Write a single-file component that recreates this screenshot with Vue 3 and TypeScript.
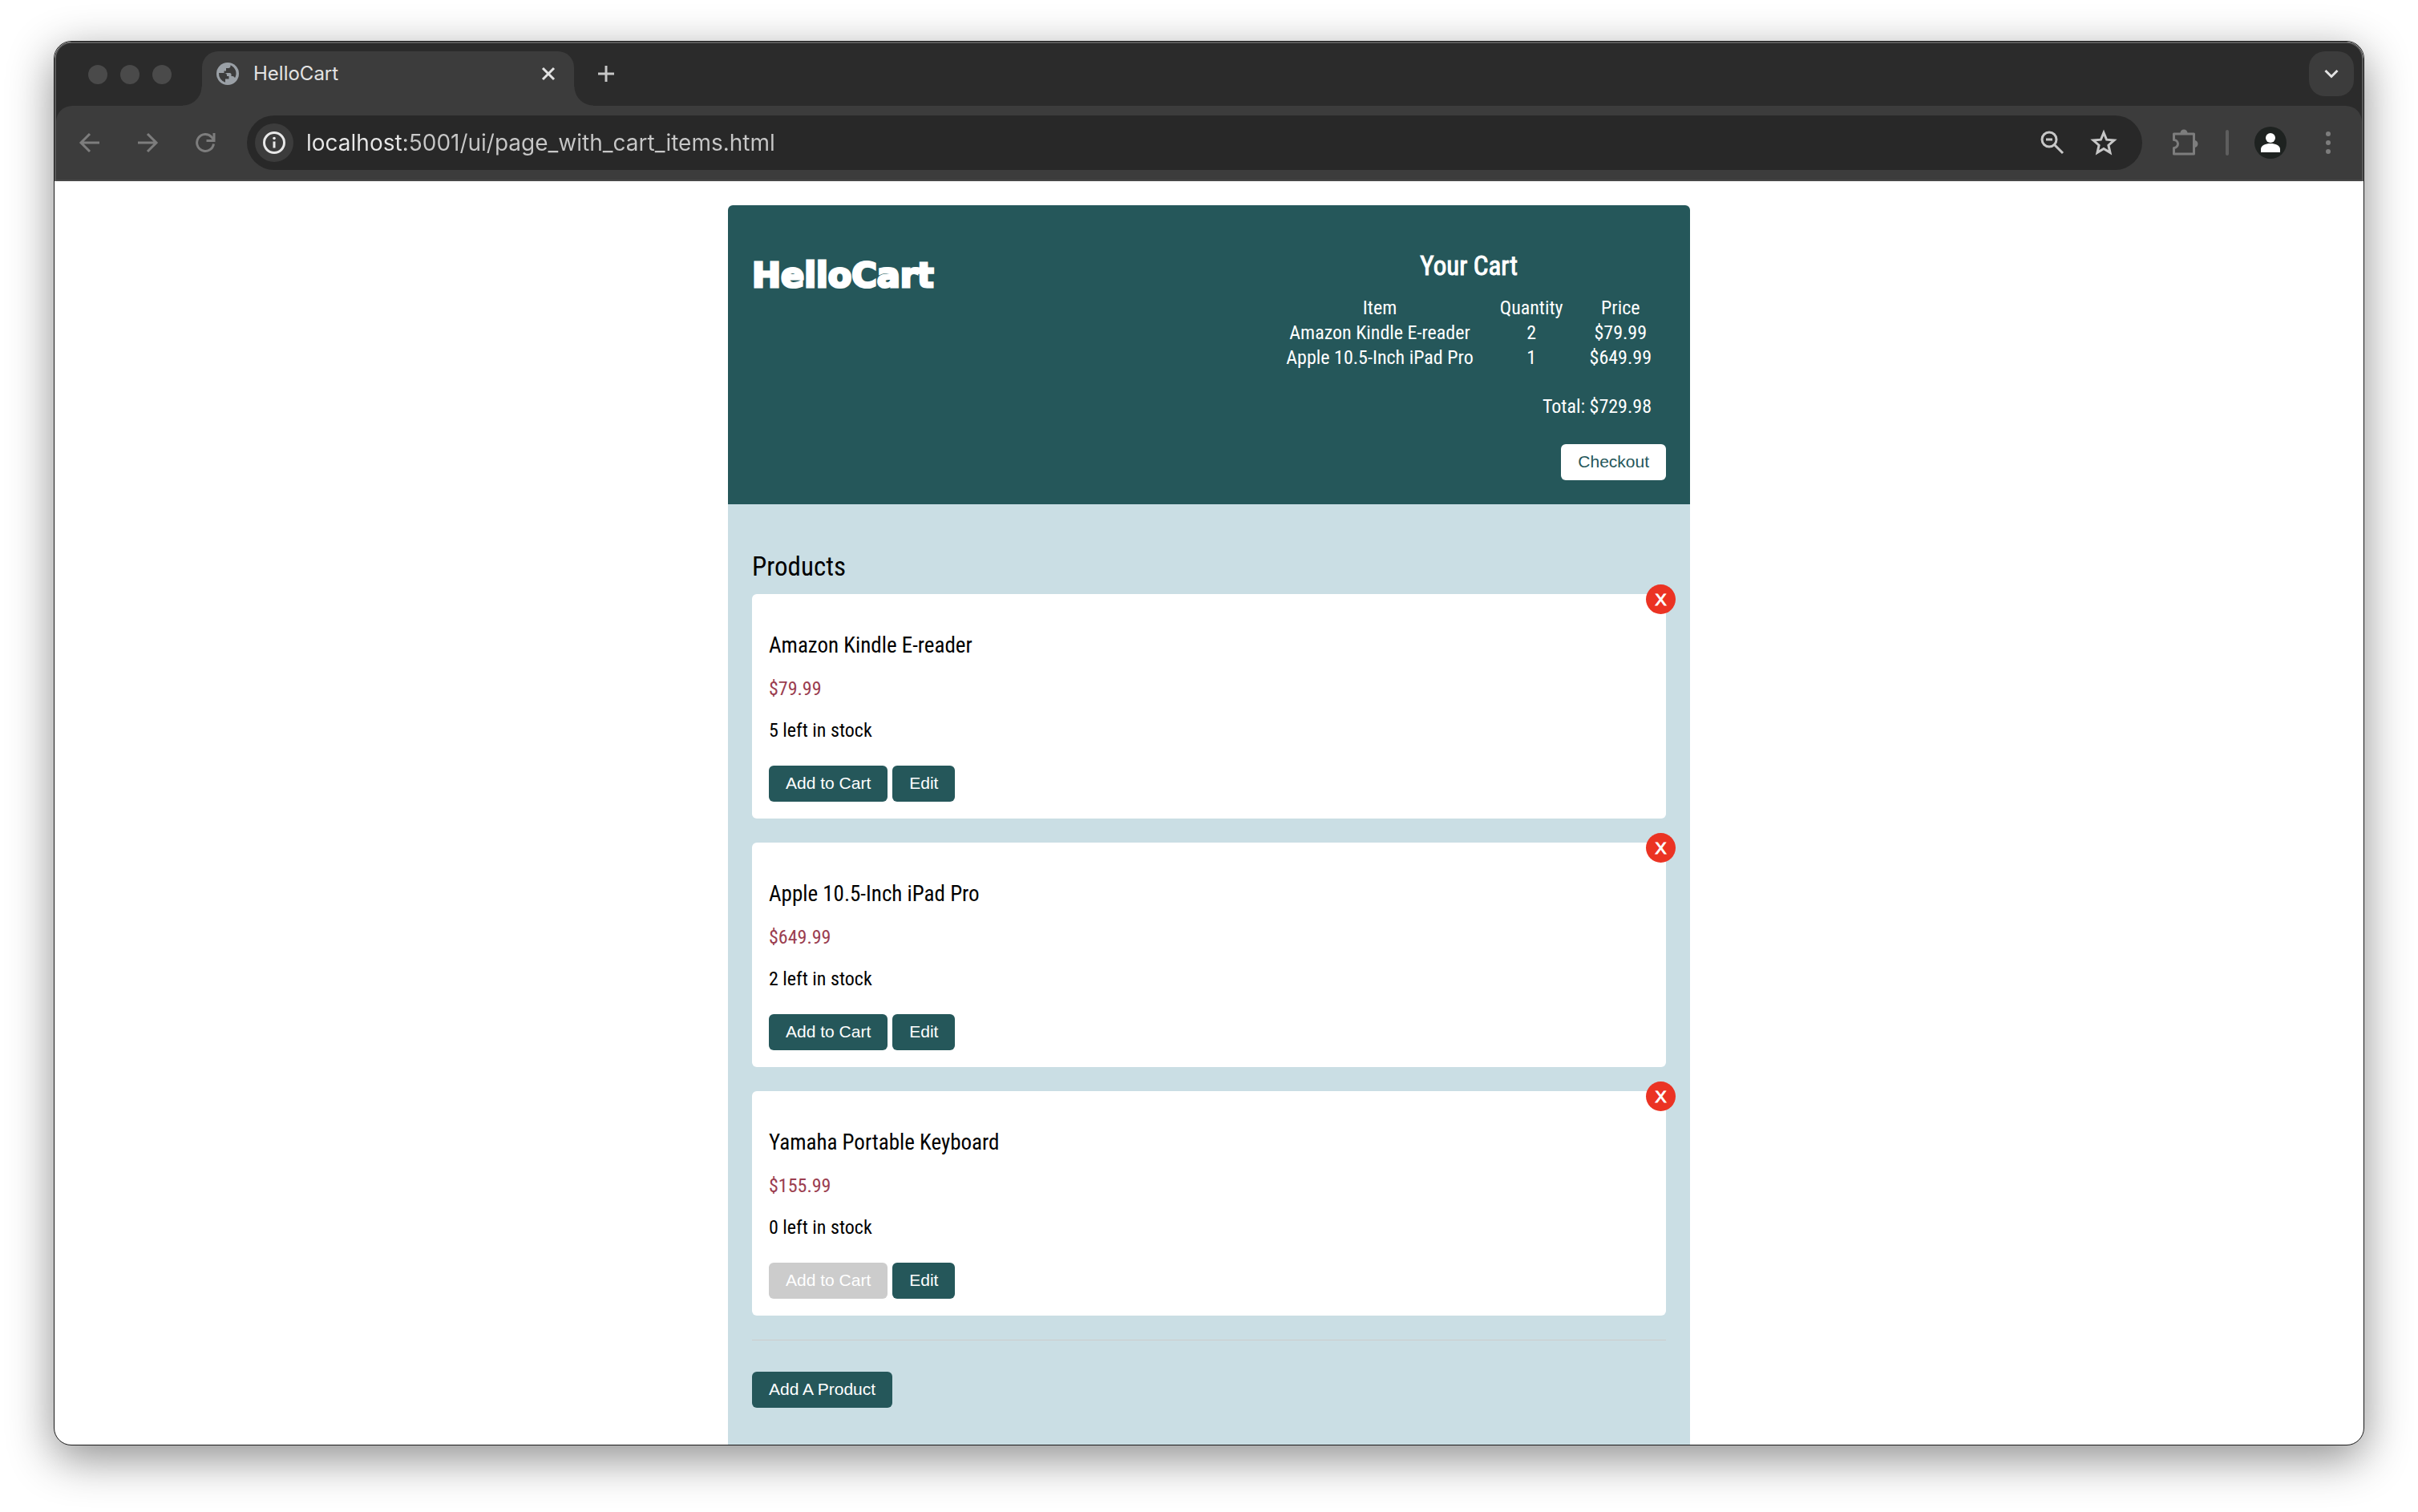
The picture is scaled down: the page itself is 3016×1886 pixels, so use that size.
<script setup lang="ts">
import { ref } from 'vue'

interface CartLine {
  name: string
  quantity: number
  price: string
}

interface Product {
  id: number
  name: string
  price: string
  stock: number
}

const url = ref('localhost:5001/ui/page_with_cart_items.html')

const cart: CartLine[] = [
  { name: 'Amazon Kindle E-reader', quantity: 2, price: '$79.99' },
  { name: 'Apple 10.5-Inch iPad Pro', quantity: 1, price: '$649.99' },
]

const products: Product[] = [
  { id: 1, name: 'Amazon Kindle E-reader', price: '$79.99', stock: 5 },
  { id: 2, name: 'Apple 10.5-Inch iPad Pro', price: '$649.99', stock: 2 },
  { id: 3, name: 'Yamaha Portable Keyboard', price: '$155.99', stock: 0 },
]
</script>

<template>
  <div class="desktop">
    <div class="window">
      <header class="chrome">
        <div class="tabstrip">
          <div class="lights"><i></i><i></i><i></i></div>
          <div class="tab">
            <svg class="globe" viewBox="0 0 28 28" width="28" height="28" aria-hidden="true">
              <circle cx="14" cy="14" r="14" fill="#9aa0a6" />
              <path d="M3 13h6.500c2.500 0 3.500 1.200 3.500 3v1h2.500v3.500h-4.500v4.200A11.200 11.200 0 0 1 3 13z" fill="#3c3c3c" />
              <path d="M17.500 3.300v1.200c0 1.500-1 2.500-2.500 2.500h-3v3.500h-2.500v2.500h7c1.500 0 2 1 2 2v2h1.500c1.500 0 2.500 1 3 2.300A11.200 11.200 0 0 0 17.500 3.300z" fill="#3c3c3c" />
            </svg>
            <span class="tab-title">HelloCart</span>
            <button class="bare" type="button" aria-label="Close tab">
              <svg viewBox="0 0 24 24" width="24" height="24"><path d="M5 5l14 14M19 5L5 19" stroke="#e3e3e3" stroke-width="3" fill="none" /></svg>
            </button>
          </div>
          <button class="bare new-tab" type="button" aria-label="New tab">
            <svg viewBox="0 0 24 24" width="24" height="24"><path d="M12 2v20M2 12h20" stroke="#c7c7c7" stroke-width="3" fill="none" /></svg>
          </button>
          <button class="bare tab-search" type="button" aria-label="Search tabs">
            <svg viewBox="0 0 24 24" width="24" height="24"><path d="M4.500 8l7.500 7.500L19.500 8" stroke="#e3e3e3" stroke-width="3" fill="none" /></svg>
          </button>
        </div>
        <div class="toolbar">
          <nav class="nav" aria-label="History">
            <button class="bare" type="button" aria-label="Back">
              <svg viewBox="0 0 28 28" width="28" height="28"><path d="M26 14H4M14 3L3 14l11 11" stroke="#7d7d7d" stroke-width="3" fill="none" /></svg>
            </button>
            <button class="bare" type="button" aria-label="Forward">
              <svg viewBox="0 0 28 28" width="28" height="28"><path d="M2 14h22M14 3l11 11-11 11" stroke="#7d7d7d" stroke-width="3" fill="none" /></svg>
            </button>
            <button class="bare" type="button" aria-label="Reload">
              <svg viewBox="0 0 28 28" width="28" height="28">
                <path d="M24.500 15.500A10.500 10.500 0 1 1 22 7l2 2.500" stroke="#7d7d7d" stroke-width="3" fill="none" />
                <path d="M25 2v9.500h-9.500" stroke="#7d7d7d" stroke-width="3" fill="none" />
              </svg>
            </button>
          </nav>
          <div class="omnibox">
            <button class="bare info" type="button" aria-label="View site information">
              <svg viewBox="0 0 28 28" width="28" height="28">
                <circle cx="14" cy="14" r="12.500" stroke="#e8e8e8" stroke-width="3" fill="none" />
                <path d="M14 12.500v8" stroke="#e8e8e8" stroke-width="3" />
                <circle cx="14" cy="8.500" r="1.800" fill="#e8e8e8" />
              </svg>
            </button>
            <input v-model="url" class="url" type="text" aria-label="Address" spellcheck="false" />
            <button class="bare" type="button" aria-label="Zoom">
              <svg viewBox="0 0 32 32" width="32" height="32" fill="none" stroke="#c7c7c7" stroke-width="3">
                <circle cx="12" cy="12" r="9" /><path d="M8 12h8M18.500 18.500l10.500 10.500" />
              </svg>
            </button>
            <button class="bare" type="button" aria-label="Bookmark this tab">
              <svg viewBox="0 0 34 34" width="34" height="34">
                <path d="M17 4.500l3.600 8.700 9.400.800-7.100 6.200 2.100 9.200-8-4.900-8 4.900 2.100-9.200L4 14l9.400-.800z" stroke="#c7c7c7" stroke-width="3" fill="none" />
              </svg>
            </button>
          </div>
          <div class="actions">
            <button class="bare" type="button" aria-label="Extensions">
              <svg viewBox="0 0 34 34" width="34" height="34">
                <path d="M3.500 6h25v25h-25v-7.500a5 5 0 0 0 0-10z" stroke="#7d7d7d" stroke-width="3" stroke-linejoin="round" fill="none" />
                <path d="M11.500 5a4.500 4.500 0 0 1 9 0zM29 14a4.500 4.500 0 0 1 0 9z" fill="#7d7d7d" />
              </svg>
            </button>
            <span class="divider"></span>
            <button class="bare profile" type="button" aria-label="Profile">
              <svg viewBox="0 0 40 40" width="40" height="40">
                <circle cx="20" cy="20" r="20" fill="#1e2220" />
                <circle cx="20" cy="14" r="6" fill="#fff" />
                <path d="M8 32v-4c0-4.500 6-7 12-7s12 2.500 12 7v4z" fill="#fff" />
              </svg>
            </button>
            <button class="bare menu" type="button" aria-label="Menu">
              <svg viewBox="0 0 28 28" width="28" height="28" fill="#7d7d7d">
                <circle cx="14" cy="3" r="3" /><circle cx="14" cy="14" r="3" /><circle cx="14" cy="25" r="3" />
              </svg>
            </button>
          </div>
        </div>
      </header>

      <div class="page">
        <main class="shop">
          <header class="shop-head">
            <h1 class="logo">HelloCart</h1>
            <section class="cart">
              <h2 class="heading">Your Cart</h2>
              <table class="lines">
                <thead>
                  <tr><th>Item</th><th>Quantity</th><th>Price</th></tr>
                </thead>
                <tbody>
                  <tr v-for="line in cart" :key="line.name">
                    <td>{{ line.name }}</td>
                    <td>{{ line.quantity }}</td>
                    <td>{{ line.price }}</td>
                  </tr>
                </tbody>
              </table>
              <p class="total">Total: $729.98</p>
              <button class="btn light" type="button">Checkout</button>
            </section>
          </header>

          <section class="products">
            <h2 class="heading">Products</h2>
            <article v-for="product in products" :key="product.id" class="card">
              <h3 class="name">{{ product.name }}</h3>
              <p class="price">{{ product.price }}</p>
              <p class="stock">{{ product.stock }} left in stock</p>
              <div class="buttons">
                <button class="btn" type="button" :disabled="product.stock === 0">Add to Cart</button>
                <button class="btn" type="button">Edit</button>
              </div>
              <button class="delete" type="button" :aria-label="'Delete ' + product.name">X</button>
            </article>
            <hr class="rule" />
            <button class="btn" type="button">Add A Product</button>
          </section>
        </main>
      </div>
    </div>
  </div>
</template>

<style>
body {
  margin: 0;
  background: #fff;
}
</style>

<style scoped>
* {
  box-sizing: border-box;
}

.desktop {
  padding: 51px 67px 83px;
  overflow: hidden;
}

.window {
  border: 1px solid #1a1a1a;
  border-radius: 22px;
  overflow: hidden;
  background: #fff;
  box-shadow: 0 16px 56px rgba(0, 0, 0, 0.45);
}

.chrome {
  border: solid #5a5a5a;
  border-width: 2px 2px 0;
  border-radius: 21px 21px 0 0;
  background: #2b2b2b;
  font-family: Inter, "Liberation Sans", sans-serif;
}

.bare {
  display: flex;
  align-items: center;
  justify-content: center;
  flex: none;
  padding: 0;
  border: 0;
  background: none;
}

.bare svg {
  display: block;
}

.tabstrip {
  display: flex;
  align-items: flex-start;
  height: 78px;
  padding: 10px 10px 0 40px;
}

.lights {
  display: flex;
  gap: 16px;
  padding-top: 17px;
}

.lights i {
  width: 24px;
  height: 24px;
  border-radius: 50%;
  background: #4a4a4a;
}

.tab {
  position: relative;
  display: flex;
  align-items: center;
  width: 464px;
  height: 68px;
  margin-left: 38px;
  padding: 0 20px 12px 18px;
  border-radius: 20px 20px 0 0;
  background: #3c3c3c;
}

.tab::before,
.tab::after {
  content: "";
  position: absolute;
  bottom: 0;
  width: 24px;
  height: 24px;
}

.tab::before {
  right: 100%;
  background: radial-gradient(circle at 0 0, transparent 23px, #3c3c3c 24px);
}

.tab::after {
  left: 100%;
  background: radial-gradient(circle at 100% 0, transparent 23px, #3c3c3c 24px);
}

.tab-title {
  flex: 1;
  margin-left: 18px;
  color: #e3e3e3;
  font-size: 24px;
  line-height: 28px;
}

.new-tab {
  margin-left: 28px;
  height: 56px;
}

.tab-search {
  width: 56px;
  height: 56px;
  margin-left: auto;
  border-radius: 20px;
  background: #3c3c3c;
}

.toolbar {
  display: flex;
  align-items: center;
  height: 94px;
  padding: 0 28px;
  border-bottom: 2px solid #474747;
  border-radius: 20px 20px 0 0;
  background: #3c3c3c;
}

.nav {
  display: flex;
  gap: 44px;
  margin-right: 38px;
}

.omnibox {
  display: flex;
  align-items: center;
  flex: 1;
  gap: 31px;
  height: 68px;
  padding: 0 31px 0 10px;
  border-radius: 34px;
  background: #282828;
}

.info {
  width: 48px;
  height: 48px;
  border-radius: 50%;
  background: #3c3c3c;
}

.url {
  flex: 1;
  min-width: 0;
  margin-left: -15px;
  padding: 0;
  border: 0;
  outline: 0;
  background: linear-gradient(90deg, #e8e8e8 123px, #c7c7c7 123px);
  background-clip: text;
  -webkit-text-fill-color: transparent;
  font-family: inherit;
  font-size: 28px;
  line-height: 36px;
}

.actions {
  display: flex;
  align-items: center;
  margin-left: 36px;
}

.divider {
  width: 4px;
  height: 32px;
  margin: 0 32px 0 34px;
  border-radius: 2px;
  background: #5e5e5e;
}

.menu {
  margin-left: 38px;
}

.page {
  padding-top: 30px;
  font-family: "Roboto Condensed", "Liberation Sans Narrow", Roboto, sans-serif;
  font-size: 24px;
  line-height: 28px;
  color: #000;
}

.shop {
  width: 100%;
  max-width: 1200px;
  margin: 0 auto;
  border-radius: 6px 6px 0 0;
  overflow: hidden;
}

.shop-head {
  display: flex;
  align-items: flex-start;
  justify-content: space-between;
  padding: 30px;
  background: #25575a;
  color: #fff;
}

.logo {
  margin: 29px 0 0;
  font-family: "DejaVu Sans", sans-serif;
  font-size: 43px;
  font-weight: 700;
  line-height: 56px;
  -webkit-text-stroke: 3px #fff;
}

.cart {
  display: flex;
  flex-direction: column;
  align-items: flex-end;
}

.heading {
  margin: 26px 0 15px;
  font-size: 33px;
  font-weight: 400;
  line-height: 40px;
}

.cart .heading {
  align-self: stretch;
  text-align: center;
  -webkit-text-stroke: 1px currentColor;
}

.lines {
  border-spacing: 3px;
  text-align: center;
}

.lines th,
.lines td {
  padding: 0 15px;
}

.lines th {
  font-weight: 400;
}

.total {
  margin: 30px 18px 33px 0;
}

.btn {
  height: 45px;
  padding: 0 21px 2px;
  border: 0;
  border-radius: 6px;
  background: #25575a;
  color: #fff;
  font-family: "Liberation Sans", Arial, sans-serif;
  font-size: 21px;
  line-height: 24px;
}

.btn.light {
  background: #fff;
  color: #25575a;
}

.btn:disabled {
  background: #ccc;
}

.products {
  padding: 2px 30px 46px;
  background: #cadee4;
}

.products .heading {
  margin: 56px 0 14px;
}

.card {
  position: relative;
  margin-bottom: 30px;
  padding: 21px;
  border-radius: 6px;
  background: #fff;
}

.name {
  margin: 27px 0 23px;
  font-size: 27px;
  font-weight: 400;
  line-height: 33px;
}

.price {
  margin: 0 0 24px;
  color: #9b3e50;
}

.stock {
  margin: 0 0 30px;
}

.buttons {
  display: flex;
  gap: 6px;
}

.delete {
  position: absolute;
  top: -12px;
  right: -12px;
  width: 37px;
  height: 37px;
  padding: 0;
  border: 0;
  border-radius: 50%;
  background: #eb3323;
  color: #fff;
  font-family: "Liberation Sans", Arial, sans-serif;
  font-size: 21px;
  line-height: 37px;
  -webkit-text-stroke: 1px #fff;
}

.rule {
  margin: 0 0 39px;
  border: 0;
  border-top: 1px solid #ccc;
}
</style>
